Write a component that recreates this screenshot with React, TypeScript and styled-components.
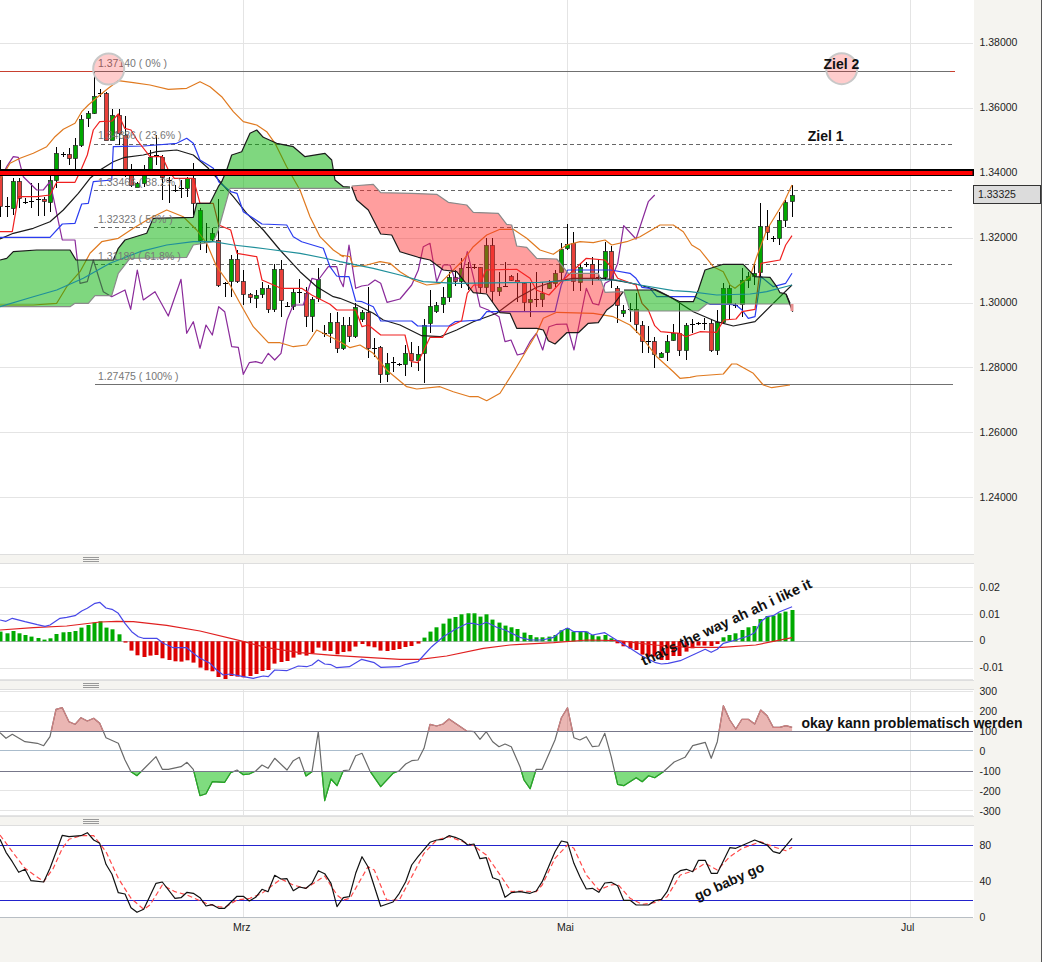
import React from 'react';
import styled, { createGlobalStyle } from 'styled-components';

const GlobalStyle = createGlobalStyle`
    html, body {
        margin: 0;
        padding: 0;
        background: #fff;
        font-family: 'Liberation Sans', Arial, sans-serif;
    }
`;

const Page = styled.div`
    width: 1048px;
    height: 962px;
    overflow: hidden;
    background: #fff;
`;

const Board = styled.div`
    width: 1041px;
    height: 962px;
    background: #f5f4f0;
    border-right: 1px solid #555;
`;

const Pane = styled.div<{ $height: number }>`
    display: grid;
    grid-template-columns: 974px 1fr;
    height: ${(p) => p.$height}px;
`;

const PlotSvg = styled.svg`
    display: block;
    position: relative;
    z-index: 1;
    overflow: visible;
    background: #fff;
`;

const Axis = styled.div<{ $first: number; $step: number }>`
    display: grid;
    grid-auto-rows: ${(p) => p.$step}px;
    align-content: start;
    margin-top: ${(p) => p.$first - p.$step / 2}px;
    padding-left: 5.5px;
    position: relative;
`;

const AxisMark = styled.span`
    display: flex;
    align-items: center;
    font-size: 10.5px;
    color: #222;
`;

const PriceTag = styled.div`
    position: absolute;
    top: 175.2px;
    left: -1px;
    right: 0;
    height: 17px;
    display: flex;
    align-items: center;
    padding-left: 4px;
    background: #dcdcdc;
    border: 1px solid #333;
    font-size: 10.5px;
    color: #222;
    z-index: 2;
`;

const Handle = styled.div`
    display: flex;
    align-items: flex-end;
    box-sizing: border-box;
    width: 974px;
    height: 10px;
    padding: 0 0 1px 83px;
    background: #f5f4f0;
    border-top: 1px solid #dedede;
    border-bottom: 1px solid #dedede;
`;

const Grip = styled.div`
    width: 16px;
    height: 5px;
    background: repeating-linear-gradient(to bottom, #999 0, #999 1px, #f5f4f0 1px, #f5f4f0 2px);
`;

const TimeAxis = styled.div`
    display: flex;
    padding: 3px 0 0 233px;
`;

const TimeMark = styled.span<{ $width: number }>`
    flex: 0 0 ${(p) => p.$width}px;
    font-size: 10.5px;
    color: #222;
`;

const FibLabel = styled.text`
    font-size: 10.5px;
    fill: #777;
`;

const Note = styled.text<{ $size?: number }>`
    font-size: ${(p) => p.$size ?? 14}px;
    font-weight: bold;
    fill: #111;
`;

// reads points taken from a crop of the chart back into page coordinates
const crop =
    (x0: number, y0: number, sx = 3) =>
    (...pts: number[]) => {
        const out: number[][] = [];
        for (let i = 0; i < pts.length; i += 2) {
            out.push([x0 + pts[i] / sx, y0 + pts[i + 1] / 3]);
        }
        return out;
    };

const a = crop(0, 40);
const b = crop(340, 170);
const c = crop(600, 170);
const m1 = crop(0, 550);
const m2 = crop(520, 550, 2.97);
const s1 = crop(0, 810);
const s2 = crop(520, 810, 2.97);

const toPath = (pts: number[][]) => pts.map((p) => p[0].toFixed(1) + ',' + p[1].toFixed(1)).join(' ');

const bollUpper = [
    ...a(0,420,30,370,60,355,100,340,140,320,165,290,190,268,225,250,245,215,265,195,300,165,325,145,355,122,400,128,450,135,505,148,560,145,600,125,630,140,665,170,700,215,730,245,770,255,800,275,825,310,860,380,900,450,930,530,960,590,1000,630,1030,650),
    ...b(0,255,30,260,40,290,80,285,120,275,150,280,180,305,220,330,260,345,300,340,330,310,370,270,400,230,440,195,480,178,520,178,560,205,600,240,640,253,680,225,720,215,760,218,795,210,815,225,860,215,900,200,960,165,1000,165,1030,185),
    ...c(270,215,275,225,300,240,340,290,370,305,390,345,405,355,430,335,450,320,470,260,500,180,555,90,576,45).slice(1),
];

const bollLower = [
    ...a(0,795,100,795,170,790,200,740,240,695,270,640,305,605,355,595,400,565,450,535,500,510,550,530,590,570,620,610,650,680,690,735,720,790,760,860,805,908,840,908,880,920,920,915,950,870,1000,895),
    ...b(0,515,30,533,60,525,100,550,140,600,200,650,230,657,300,650,340,665,390,680,415,680,440,692,480,670,530,590,590,490,610,445,650,427,760,430,820,440,870,465,900,495,950,560,1000,605,1020,625,1050,622),
    ...c(290,618,370,612,395,582,410,582,460,610,490,645,515,653,570,645),
];

const lagging = [
    ...a(0,420,20,380,40,350,55,352,70,410,110,450,130,450,150,425,170,520,187,600,225,600,240,730,262,725,280,660,310,755,335,770,375,750,392,808,412,690,430,780,465,755,505,828,543,718,560,880,580,845,600,925,618,855,637,885,656,800,674,815,695,920,715,922,730,1003,748,968,767,965,786,970,805,940,824,960,843,940,861,840,880,795,910,795,936,715,955,720,985,680,1010,680,1020,720),
    ...b(10,350,27,225,47,355,65,348,85,345,105,330,122,340,141,397,180,387,215,345,235,300,250,230,270,220,290,335,310,285,330,285,345,330,365,320,382,245,400,320,420,410,445,420,460,430,477,440,495,515,513,510,532,555,551,550,570,515,589,490,608,540,627,470,650,463,680,462,702,540,739,355,758,400,776,405,795,340,813,330,833,280,851,167,888,207,925,95,944,75),
];

const tenkan = [
    ...a(0,575,37,575,55,470,110,470,150,465,170,427,225,427,245,385,262,345,280,270,299,245,336,243,355,222,374,265,393,270,411,300,450,350,487,350,505,390,523,415,580,415,600,490,640,490,656,555,692,570,711,640,770,650,786,720,843,745,905,745,935,765,990,793,1010,810),
    ...b(0,420,47,420,66,470,85,465,122,495,195,495,214,575,233,578,252,540,270,502,308,502,327,470,365,452,382,370,401,345,420,345,437,300,530,298,570,325,589,360,627,375,664,335,739,265,795,270,813,290,833,325,888,345,906,400,925,420,944,467,962,485,1019,490,1037,500),
    ...c(300,485,350,487,371,450,408,447,426,425,465,418,483,280,540,270,557,225,576,197),
];

const kijun = [
    ...a(0,592,150,592,187,552,225,550,245,492,265,490,280,425,335,420,340,320,430,318,470,315,530,310,560,295,580,310,600,360,625,375,640,385,656,425,692,455,711,460,730,515,786,552,860,555,880,590,905,605,970,625,990,680,1010,708),
    ...b(0,320,27,320,47,393,66,395,100,410,122,453,215,453,233,468,327,468,345,455,420,450,440,425,645,425,664,345,683,300,813,300,870,310,888,325,906,352,930,355,950,380),
    ...c(240,380,285,380,330,403,390,403,408,405,426,420,445,445,465,440,483,320,520,350,557,340,576,310),
];

const midBand = [
    ...a(0,597,40,580,100,565,150,545,190,510,235,460,270,415,300,390,340,365,375,352,430,345,470,335,530,330,580,345,625,385,660,425,700,470,740,520,790,570,840,630,900,695,950,740,1000,770),
    ...b(0,385,50,405,100,430,130,450,180,465,245,497,300,500,350,480,400,455,470,430,530,385,590,352,640,335,700,325,790,325,850,335,900,345,950,360,990,380),
    ...c(280,425,350,455,400,468,465,455,520,400,576,345),
];

const longAverage = [
    ...a(0,800,100,770,170,750,250,715,330,670,420,635,500,615,580,605,640,605,700,615,800,627,900,640,1000,660),
    ...b(0,275,100,295,180,315,250,335,350,340,600,337,700,330,830,330,900,345,1000,362),
    ...c(270,365,350,375,450,372,500,365,576,345),
];

const greenCloudTop = a(0,660,20,655,40,635,110,630,210,630,228,660,340,660,355,625,375,600,440,580,460,535,580,532,590,490,630,490,655,440,665,425,680,390,695,345,725,335,750,280,770,270,790,292,830,310,880,320,915,350,975,340,995,360,1005,420,1030,440,1050,441);
const greenCloudBottom = a(0,800,210,800,225,790,265,790,285,767,335,767,355,700,390,655,560,652,580,615,640,605,655,570,690,445,1050,445);

const redCloudTop = b(35,48,100,43,122,68,215,70,290,73,325,97,380,105,400,127,475,130,500,163,515,165,530,228,560,232,590,265,650,267,685,310,775,310,790,350,795,367,850,365);
const redCloudBottom = b(35,50,50,90,85,120,122,192,155,195,180,245,235,262,270,270,310,300,350,305,400,368,440,372,480,428,510,430,530,475,590,475,610,480,625,512,645,522,680,488,715,488,745,460,775,458,800,420,820,405,850,365);

const lastCloudTop = c(72,360,165,360,240,395,280,395,295,360,315,300,370,283,430,283,465,320,510,322,530,350,540,368,558,372,570,400);
const lastCloudBottom = c(72,365,90,423,295,423,320,402,570,402);
const lastCloudTail = c(558,372,578,425);

const macdBlue = [
    ...m1(0,210,18,214,37,205,75,215,112,224,135,229,150,225,180,205,200,202,225,197,245,183,262,175,285,160,299,157,318,174,336,178,355,190,375,220,395,245,415,260,430,265,470,265,490,280,520,293,560,293,580,310,600,325,630,340,650,360,670,375,690,372,730,380,760,385,790,378,805,380,824,360,860,362,895,348,920,350,936,345,955,330,974,342,993,344,1010,353,1048,350,1085,328,1123,338,1142,352,1198,350,1217,343,1254,335,1272,315,1295,290,1330,260,1366,238,1403,220,1420,220,1440,225,1459,217,1490,232,1515,240),
    ...m2(0,262,30,270,66,270,100,262,123,243,141,234,160,245,197,245,215,255,252,248,290,272,327,295,363,318,400,337,420,342,440,340,476,332,513,315,550,298,568,307,586,298,604,280,641,270,678,258,697,248,715,215,734,200,752,197,771,185,808,170),
];

const macdRed = [
    ...m1(0,240,100,233,200,228,300,216,350,214,400,215,500,226,600,243,720,272,800,293,900,308,1000,316,1100,322,1200,328,1260,328,1340,318,1450,295,1530,285),
    ...m2(0,283,100,278,200,270,290,272,400,285,500,292,600,292,700,285,808,263),
];

const histogram = [
    9.7,8,10.3,8,6.3,4.7,3.3,1.7,3,7.3,9,9.3,10.3,13.7,16.3,18.7,20,13.7,12,7,
    -1.3,-9.3,-14,-15.7,-14.3,-13.7,-17,-18.7,-20,-20.3,-19,-21.3,-26.3,-29,-30,-35.7,-37.7,-34.7,-35.3,-36,-34.7,-32.7,-29.7,-28.7,-22.3,-20.7,-19.7,-16.3,-13.3,-14.3,-11.7,-6.3,-9.3,-9.7,-13,-10.7,-10,-5.3,-2.7,-5,-6,-9.3,-9.7,-8.7,-7.7,-5.7,-4.7,-2.3,
    3.7,9.7,14,17.7,22.7,24.3,27,28,28,24.7,27,21.7,18.7,15.7,14,12.3,
    8.7,6.3,4,4,4.7,6.3,11,13.3,9.7,9.7,9.7,6.3,5,6.3,3,
    -2,-5,-7.3,-8.7,-13.3,-15.3,-15.3,-18.7,-18.7,-14.7,-14.7,-10.3,-7,-4.3,-4.3,-4.7,-2.7,
    4,6.3,8,11.3,14,15.3,22.3,25.3,25.7,28,29.7,31.3,
];

const cci = [
    ...m1(0,548,18,565,37,553,75,575,112,580,131,587,150,560,168,478,187,473,207,515,225,523,243,503,262,513,281,505,299,520,318,563,355,580,375,630,393,665,411,677,431,657,468,620,487,658,505,658,543,650,561,637,580,658,600,737,618,731,637,695,674,697,692,668,711,660,730,674,748,672,767,663,786,645,804,655,824,625,861,660,880,632,898,622,918,678,936,665,955,545,974,752,993,687,1011,707,1030,662,1048,660,1067,617,1086,610,1111,665,1142,710,1179,670,1198,662,1217,642,1235,632,1254,630,1272,595,1290,523,1310,528,1329,522,1347,507,1400,543,1422,545,1440,568,1459,545,1478,575,1497,590,1515,582,1534,590),
    ...m2(0,650,12,690,30,716,48,658,66,658,104,570,123,503,141,473,160,563,178,570,197,560,215,590,234,588,252,550,271,620,290,703,308,707,345,683,363,695,382,677,400,683,426,665,458,636,490,622,513,587,550,577,568,625,586,575,604,467,623,510,641,537,659,508,678,508,697,522,715,480,734,497,752,532,771,532,790,527,808,532),
];

const stochBlack = [
    ...s1(0,88,18,127,37,155,56,187,75,178,93,212,131,216,150,175,187,76,207,80,243,77,262,68,281,90,299,100,318,163,336,193,355,248,375,252,393,293,411,307,431,298,468,220,487,216,525,265,543,263,561,247,580,250,600,263,618,288,637,284,656,295,674,295,711,259,730,259,748,273,767,262,786,238,804,245,824,196,843,207,861,206,880,242,898,231,918,235,936,220,955,182,974,191,993,220,1011,290,1030,263,1048,260,1067,190,1086,140,1104,170,1142,289,1179,276,1198,250,1217,215,1235,165,1254,140,1290,97,1310,90,1329,88,1347,77,1366,82,1385,90,1403,105,1422,102,1440,146,1459,143,1478,203,1497,210,1515,262,1534,248),
    ...s2(0,245,30,250,48,243,66,215,85,170,104,125,123,93,141,97,160,160,178,200,197,237,215,235,234,247,252,219,271,217,290,227,308,271,327,271,345,285,382,285,400,272,420,268,437,245,458,195,476,182,494,178,513,185,530,151,550,151,568,190,586,190,623,113,641,115,697,90,734,105,752,125,771,130,808,85),
];

const stochRed = [
    ...s1(0,75,37,125,75,175,131,215,160,175,187,115,207,88,243,77,281,77,318,125,355,205,393,265,431,298,450,285,487,225,525,245,561,255,618,280,656,290,674,292,711,270,750,265,786,250,843,207,880,225,918,235,974,198,1011,255,1030,270,1050,265,1104,170,1123,180,1160,270,1198,270,1235,200,1272,130,1310,90,1347,80,1403,100,1422,108,1459,135,1497,190,1534,245),
    ...s2(0,243,48,245,66,225,104,145,141,105,160,115,197,195,234,240,271,225,290,222,327,265,363,283,400,278,437,260,476,195,513,183,550,160,586,180,623,140,660,115,715,95,752,110,790,122,808,112),
];

type Candle = [string, number, number, number, number];

const candles: Candle[] = [
    ['r',173,206,160,217],['d',206,206,197,217],['g',181,208,178,215],['r',181,198,178,208],['d',202,202,198,204],['d',201,201,183,208],['d',199,199,183,216],['r',199,201,197,216],
    ['g',180,202,175,212],['g',153,180,147,188],['d',154,154,152,157],['r',154,158,148,165],['g',145,158,138,170],['g',119,145,115,147],['g',113,118,111,127],['g',96,113,72,114],
    ['d',93,93,89,97],['r',93,140,92,140],['g',115,140,109,140],['r',115,133,109,145],['r',135,170,116,177],['r',175,185,164,187],['g',183,187,182,187],['g',175,183,165,187],
    ['g',157,170,150,173],['d',155,155,135,165],['r',157,177,155,200],['d',180,180,177,203],['d',190,190,185,192],['d',188,188,180,198],['g',178,188,177,197],['r',178,203,163,215],
    ['g',210,240,208,250],['d',242,242,223,253],['g',233,239,228,242],['r',240,285,199,287],['d',283,283,282,297],['g',259,281,255,297],['r',259,281,250,283],['r',281,294,270,305],
    ['r',294,297,293,303],['g',295,298,290,308],['g',288,294,282,298],['r',288,309,285,313],['g',269,309,264,312],['r',269,300,260,317],['d',306,306,302,307],['g',292,306,288,310],
    ['d',292,292,279,303],['r',293,316,287,327],['g',299,316,297,332],['g',279,298,268,302],['d',333,333,325,337],['g',322,333,313,343],['r',322,348,312,353],['g',325,348,317,350],
    ['r',325,336,317,342],['g',307,336,303,338],['g',312,319,310,322],['r',312,348,287,358],['d',348,348,338,357],['r',347,374,346,383],['g',363,374,353,382],['d',362,362,357,372],
    ['d',364,364,363,366],['g',353,364,345,376],['r',353,360,342,367],['g',354,360,346,371],['g',325,353,319,383],['g',306,323,290,333],['g',305,311,302,313],['g',297,304,287,313],
    ['g',277,297,272,302],['r',277,281,270,286],['g',268,281,258,288],['d',267,267,262,290],['d',267,267,264,269],['r',267,287,267,293],['g',245,287,238,293],['r',245,291,238,302],
    ['g',287,291,272,296],['d',286,286,262,287],['r',276,280,275,281],['r',280,282,273,302],['r',283,302,282,312],['g',299,302,283,317],['d',299,299,272,307],['g',293,299,282,307],
    ['g',283,288,280,289],['g',273,283,270,287],['g',249,272,243,280],['g',244,248,224,250],['r',243,281,232,291],['g',267,282,263,291],['d',264,264,262,267],['r',264,278,257,285],
    ['d',277,277,260,280],['g',251,277,242,280],['r',251,279,246,288],['r',288,305,286,323],['g',310,313,305,317],['d',309,309,303,322],['r',309,324,293,333],['r',325,341,321,353],
    ['d',341,341,326,353],['r',341,354,337,368],['g',353,357,352,358],['g',341,352,335,361],['g',333,340,324,341],['r',333,350,303,356],['g',325,350,323,360],['d',324,324,319,333],
    ['d',323,323,322,325],['d',323,323,318,330],['r',323,350,319,352],['g',322,350,310,355],['g',288,322,283,323],['g',288,303,285,320],['d',305,305,303,308],['g',280,304,268,317],
    ['g',276,280,272,288],['g',273,276,264,285],['g',226,272,203,277],['r',226,232,210,240],['d',238,238,236,242],['g',220,238,212,245],['g',202,220,200,227],['g',195,201,185,217],
];

const slotX = (i: number) => 0.8 + 6.23 * i;
const crisp = (v: number) => Math.floor(v) + 0.5;

const Candles = () => (
    <g>
        {candles.map(([kind, top, bottom, high, low], i) => {
            const x = crisp(slotX(i));
            return (
                <g key={i}>
                    <line x1={x} x2={x} y1={high} y2={low} stroke="#000" strokeWidth={1} />
                    {kind === 'd' ? (
                        <line x1={x - 2.5} x2={x + 2.5} y1={top + 0.5} y2={top + 0.5} stroke="#000" strokeWidth={1} />
                    ) : (
                        <rect
                            x={x - 2}
                            y={top + 0.5}
                            width={4}
                            height={bottom - top}
                            fill={kind === 'g' ? '#00a800' : '#e8403a'}
                            stroke="#222"
                            strokeWidth={0.7}
                        />
                    )}
                </g>
            );
        })}
    </g>
);

const Trace = ({ pts, color, width = 1.2, dash }: { pts: number[][]; color: string; width?: number; dash?: string }) => (
    <polyline points={toPath(pts)} fill="none" stroke={color} strokeWidth={width} strokeDasharray={dash} strokeLinejoin="round" />
);

const Cloud = ({
    top,
    bottom,
    fill,
    topEdge = '#1a1a1a',
    bottomEdge = '#8a8a8a',
}: {
    top: number[][];
    bottom: number[][];
    fill: string;
    topEdge?: string;
    bottomEdge?: string;
}) => (
    <g>
        <polygon points={toPath([...top, ...[...bottom].reverse()])} fill={fill} />
        <Trace pts={bottom} color={bottomEdge} />
        <Trace pts={top} color={topEdge} />
    </g>
);

const Grid = ({ rows, top, height }: { rows: number[]; top: number; height: number }) => (
    <g stroke="#e4e4e4" strokeWidth={1}>
        {rows.map((y) => (
            <line key={y} x1={0} x2={973} y1={crisp(y)} y2={crisp(y)} />
        ))}
        {[243.7, 567.8, 910.7].map((x) => (
            <line key={x} x1={crisp(x)} x2={crisp(x)} y1={top} y2={top + height} />
        ))}
    </g>
);

const Plot = ({ top, height, children }: { top: number; height: number; children: React.ReactNode }) => (
    <PlotSvg viewBox={`0 ${top} 974 ${height}`} width={974} height={height}>
        {children}
    </PlotSvg>
);

const Level = ({ y, color }: { y: number; color: string }) => (
    <line x1={0} x2={973} y1={crisp(y)} y2={crisp(y)} stroke={color} strokeWidth={1} />
);

const fibDashes = [144.5, 190.5, 227.5, 264.5];

const fibLabels = [
    { text: '1.37140 ( 0% )', y: 66.7 },
    { text: '1.34886 ( 23.6% )', y: 139 },
    { text: '1.33466 ( 38.2% )', y: 186 },
    { text: '1.32323 ( 50% )', y: 223 },
    { text: '1.31180 ( 61.8% )', y: 259.5 },
    { text: '1.27475 ( 100% )', y: 380 },
];

const MainChart = () => (
    <Plot top={0} height={554}>
        <Grid rows={[43.5, 108.4, 173.3, 238.3, 303, 367.5, 432.5, 497.5]} top={0} height={554} />
        <line x1={0} x2={955} y1={71.5} y2={71.5} stroke="#707070" strokeWidth={1} />
        <line x1={0} x2={93} y1={71.5} y2={71.5} stroke="#c8402f" strokeWidth={1} />
        <line x1={950} x2={955} y1={71.5} y2={71.5} stroke="#c8402f" strokeWidth={1} />
        {fibDashes.map((y) => (
            <line key={y} x1={94} x2={953} y1={y} y2={y} stroke="#666" strokeWidth={1} strokeDasharray="4 3" />
        ))}
        <line x1={95} x2={953} y1={384.5} y2={384.5} stroke="#707070" strokeWidth={1} />
        <Candles />
        <Trace pts={lagging} color="#8a2a9a" />
        <Trace pts={bollUpper} color="#e07a20" />
        <Trace pts={bollLower} color="#e07a20" />
        <Trace pts={midBand} color="#1a1a1a" />
        <Trace pts={kijun} color="#2a3cf0" />
        <Trace pts={tenkan} color="#f02020" />
        <Cloud top={greenCloudTop} bottom={greenCloudBottom} fill="rgba(0,175,0,0.5)" />
        <Cloud
            top={redCloudTop}
            bottom={redCloudBottom}
            fill="rgba(255,40,40,0.45)"
            topEdge="#8a8a8a"
            bottomEdge="#1a1a1a"
        />
        <Cloud top={lastCloudTop} bottom={lastCloudBottom} fill="rgba(0,175,0,0.5)" />
        <Trace pts={lastCloudTail} color="#1a1a1a" />
        <line x1={792} x2={792} y1={304} y2={311} stroke="#e89090" strokeWidth={3} />
        <Trace pts={longAverage} color="#1f8f9a" />
        {fibLabels.map((l) => (
            <FibLabel key={l.text} x={98} y={l.y}>
                {l.text}
            </FibLabel>
        ))}
        <circle cx={108.7} cy={69} r={15.5} fill="rgba(255,0,0,0.2)" stroke="#c8c8c8" strokeWidth={2} />
        <circle cx={841.7} cy={68.7} r={15.5} fill="rgba(255,0,0,0.2)" stroke="#c8c8c8" strokeWidth={2} />
        <rect x={0} y={169} width={974} height={7} fill="#000" />
        <rect x={0} y={171} width={972.5} height={4} fill="#f00" />
        <Note x={823.5} y={68.5}>Ziel 2</Note>
        <Note x={807.7} y={141}>Ziel 1</Note>
    </Plot>
);

const MacdChart = () => (
    <Plot top={564} height={116}>
        <Grid rows={[587.4, 614.4, 668.3, 679.4]} top={564} height={116} />
        <Level y={641.3} color="#b0b4b8" />
        {histogram.map((v, i) => (
            <rect
                key={i}
                x={Math.floor(slotX(i)) - 1.5}
                y={v > 0 ? 641.3 - v : 641.3}
                width={4}
                height={Math.abs(v)}
                fill={v > 0 ? '#00aa00' : '#dd0000'}
            />
        ))}
        <Trace pts={macdRed} color="#e02020" />
        <Trace pts={macdBlue} color="#4848e8" />
        <Note $size={14.5} x={644} y={666} transform="rotate(-25 644 666)">
            that's the way ah ah i like it
        </Note>
    </Plot>
);

const cciArea = (pts: number[][], level: number) =>
    toPath([...pts, [pts[pts.length - 1][0], level], [pts[0][0], level]]);

const CciChart = () => (
    <Plot top={690} height={126}>
        <defs>
            <clipPath id="over">
                <rect x={0} y={690} width={974} height={41.7} />
            </clipPath>
            <clipPath id="under">
                <rect x={0} y={771.3} width={974} height={45} />
            </clipPath>
        </defs>
        <Grid rows={[691.3, 711.7, 790.3, 810.3, 815.5]} top={690} height={126} />
        <Level y={750.7} color="#aabccc" />
        <polygon points={cciArea(cci, 731.7)} fill="rgba(205,80,75,0.42)" clipPath="url(#over)" />
        <polygon points={cciArea(cci, 771.3)} fill="rgba(0,185,0,0.5)" clipPath="url(#under)" />
        <Trace pts={cci} color="#6a6a6a" />
        <g clipPath="url(#over)">
            <Trace pts={cci} color="#d08080" />
        </g>
        <g clipPath="url(#under)">
            <Trace pts={cci} color="#20b020" />
        </g>
        <Level y={731.7} color="#77778a" />
        <Level y={771.3} color="#77778a" />
        <Note x={801.5} y={727.7}>okay kann problematisch werden</Note>
    </Plot>
);

const StochChart = () => (
    <Plot top={826} height={92}>
        <Grid rows={[881.3]} top={826} height={92} />
        <Level y={917.3} color="#b8bec4" />
        <Level y={845} color="#2222cc" />
        <Level y={900.3} color="#2222cc" />
        <Trace pts={stochRed} color="#ff4a4a" dash="5 3" />
        <Trace pts={stochBlack} color="#111" />
        <Note x={697} y={901} transform="rotate(-24 697 901)">go baby go</Note>
    </Plot>
);

const AxisMarks = ({ first, step, marks }: { first: number; step: number; marks: string[] }) => (
    <Axis $first={first} $step={step}>
        {marks.map((m) => (
            <AxisMark key={m}>{m}</AxisMark>
        ))}
    </Axis>
);

export default function App() {
    return (
        <Page>
            <GlobalStyle />
            <Board>
                <Pane $height={554}>
                    <MainChart />
                    <Axis $first={42.3} $step={65}>
                        {['1.38000', '1.36000', '1.34000', '1.32000', '1.30000', '1.28000', '1.26000', '1.24000'].map((m) => (
                            <AxisMark key={m}>{m}</AxisMark>
                        ))}
                        <PriceTag>1.33325</PriceTag>
                    </Axis>
                </Pane>
                <Handle>
                    <Grip />
                </Handle>
                <Pane $height={116}>
                    <MacdChart />
                    <AxisMarks first={23} step={26.7} marks={['0.02', '0.01', '0', '-0.01']} />
                </Pane>
                <Handle>
                    <Grip />
                </Handle>
                <Pane $height={126}>
                    <CciChart />
                    <AxisMarks first={1} step={20} marks={['300', '200', '100', '0', '-100', '-200', '-300']} />
                </Pane>
                <Handle>
                    <Grip />
                </Handle>
                <Pane $height={92}>
                    <StochChart />
                    <AxisMarks first={19} step={36} marks={['80', '40', '0']} />
                </Pane>
                <TimeAxis>
                    <TimeMark $width={324}>Mrz</TimeMark>
                    <TimeMark $width={344}>Mai</TimeMark>
                    <TimeMark $width={40}>Jul</TimeMark>
                </TimeAxis>
            </Board>
        </Page>
    );
}
